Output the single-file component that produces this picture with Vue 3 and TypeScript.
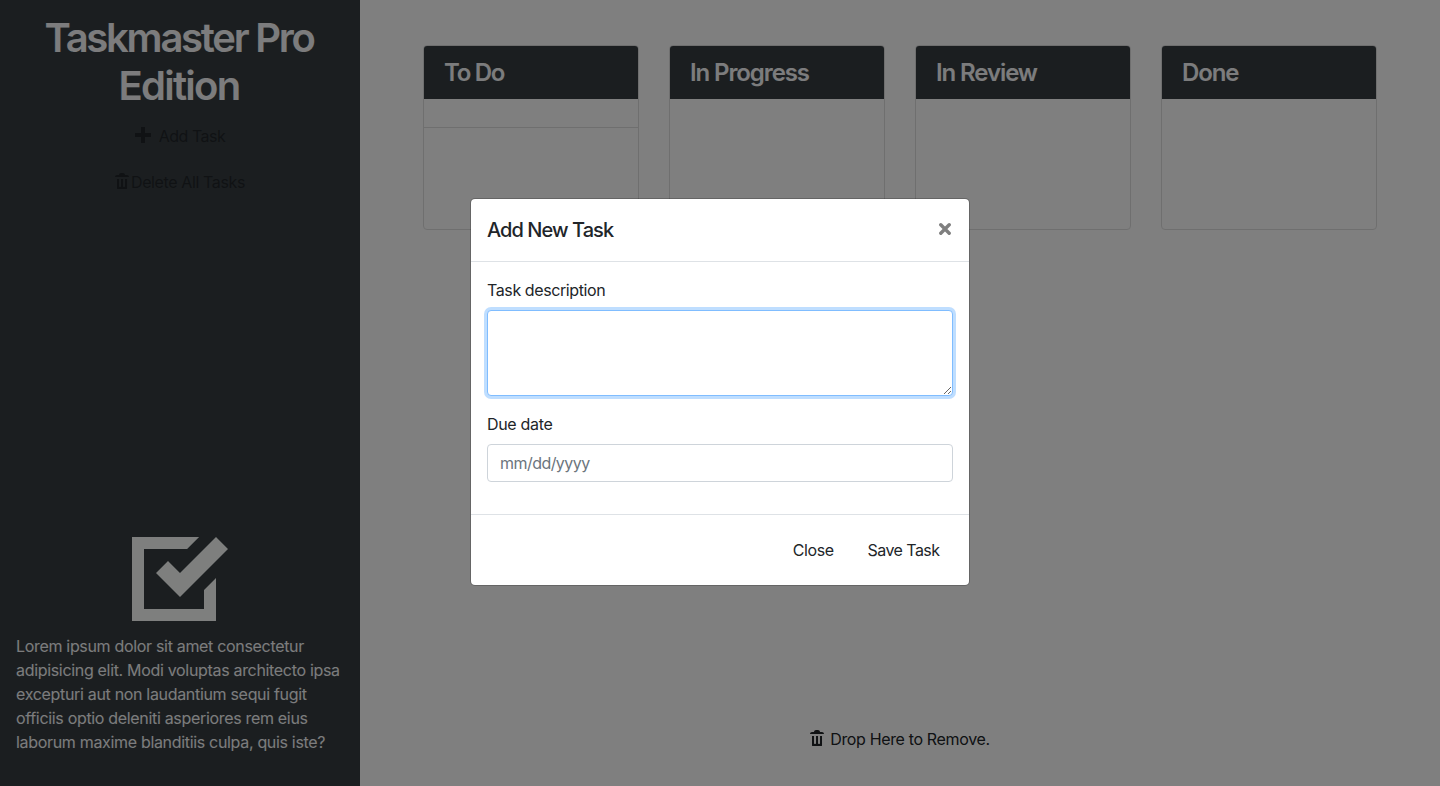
<script setup lang="ts">
import { ref } from 'vue'

interface Column {
  title: string
  kind: string
  tasks: string[]
}

const columns: Column[] = [
  { title: 'To Do', kind: 'todo', tasks: [''] },
  { title: 'In Progress', kind: 'progress', tasks: [] },
  { title: 'In Review', kind: 'review', tasks: [] },
  { title: 'Done', kind: 'done', tasks: [] },
]

const description = ref('')
const dueDate = ref('')

const trashPath =
  'M3 0c-.55 0-1 .45-1 1h-1c-.55 0-1 .45-1 1h7c0-.55-.45-1-1-1h-1c0-.55-.45-1-1-1h-1zm-2 3v4.81c0 .11.08.19.19.19h4.63c.11 0 .19-.08.19-.19v-4.81h-1v3.5c0 .28-.22.5-.5.5s-.5-.22-.5-.5v-3.5h-1v3.5c0 .28-.22.5-.5.5s-.5-.22-.5-.5v-3.5h-1z'
</script>

<template>
  <div class="page">
    <aside class="sidebar">
      <header class="brand">
        <h1><span class="first">Taskmaster Pro</span> <span class="second">Edition</span></h1>
        <button class="btn add" type="button">
          <svg class="icon" viewBox="0 0 8 8"><path d="M3 0v3h-3v2h3v3h2v-3h3v-2h-3v-3h-2z" /></svg>
          <span>Add Task</span>
        </button>
        <button class="btn delete" type="button">
          <svg class="icon" viewBox="0 0 8 8"><path :d="trashPath" /></svg>
          <span>Delete All Tasks</span>
        </button>
      </header>
      <footer class="about">
        <svg class="logo" viewBox="0 0 8 8">
          <path d="M0 0v7h7v-3.59l-1 1v1.59h-5v-5h3.59l1-1h-5.59zm7 0l-3 3-1-1-1 1 2 2 4-4-1-1z" />
        </svg>
        <p>
          Lorem ipsum dolor sit amet consectetur adipisicing elit. Modi voluptas architecto ipsa
          excepturi aut non laudantium sequi fugit officiis optio deleniti asperiores rem eius
          laborum maxime blanditiis culpa, quis iste?
        </p>
      </footer>
    </aside>

    <main class="board">
      <div class="columns">
        <section v-for="column in columns" :key="column.title" class="card">
          <h4 :class="column.kind">{{ column.title }}</h4>
          <ul>
            <li v-for="(task, i) in column.tasks" :key="i">{{ task }}</li>
          </ul>
        </section>
      </div>
      <div class="drop">
        <svg class="icon" viewBox="0 0 8 8"><path :d="trashPath" /></svg>
        <span>Drop Here to Remove.</span>
      </div>
    </main>

    <div class="backdrop">
      <form class="modal" @submit.prevent>
        <div class="modal-header">
          <h5>Add New Task</h5>
          <button class="close" type="button" aria-label="Close">
            <svg viewBox="0 0 12 12"><path d="M1.8 1.8L10.2 10.2M10.2 1.8L1.8 10.2" /></svg>
          </button>
        </div>
        <div class="modal-body">
          <label class="desc-label" for="description">Task description</label>
          <textarea id="description" v-model="description" rows="3"></textarea>
          <label class="date-label" for="due">Due date</label>
          <input id="due" v-model="dueDate" type="text" placeholder="mm/dd/yyyy" />
        </div>
        <div class="modal-footer">
          <button class="btn cancel" type="button">Close</button>
          <button class="btn save" type="button">Save Task</button>
        </div>
      </form>
    </div>
  </div>
</template>

<style>
body {
  margin: 0;
  overflow: hidden;
}
</style>

<style scoped>
* {
  box-sizing: border-box;
}

.page {
  position: relative;
  display: flex;
  height: 786px;
  background: #fff;
  color: #212529;
  font-family: Inter, 'Liberation Sans', sans-serif;
  font-size: 16px;
  line-height: 24px;
  letter-spacing: -0.32px;
}

h1,
h4,
h5,
p,
ul {
  margin: 0;
  padding: 0;
}

.sidebar {
  display: flex;
  flex-direction: column;
  justify-content: space-between;
  width: 360px;
  padding: 14px 16px 32px;
  background: #363d41;
  color: #f8f9fa;
}

.brand {
  display: flex;
  flex-direction: column;
  align-items: center;
  text-align: center;
}

h1 {
  width: 290px;
  margin-bottom: 7px;
  padding-right: 2px;
  font-size: 40px;
  font-weight: 600;
  line-height: 48px;
}

.first {
  letter-spacing: -2.25px;
}

.second {
  letter-spacing: -1.75px;
}

.btn {
  display: flex;
  align-items: center;
  height: 38px;
  padding: 0 13px;
  border: 0;
  background: transparent;
  color: #212529;
  font: inherit;
  letter-spacing: inherit;
}

.icon {
  width: 16px;
  height: 16px;
  fill: currentColor;
}

.add {
  gap: 8px;
  margin-bottom: 8px;
  letter-spacing: -0.5px;
}

.delete {
  letter-spacing: -0.38px;
}

.add .icon,
.delete .icon {
  margin-top: -2px;
}

.logo {
  display: block;
  width: 96px;
  height: 96px;
  margin: 0 auto 1px;
  fill: #fcfffc;
}

.about p {
  margin-right: -4px;
}

.board {
  display: flex;
  flex: 1;
  flex-direction: column;
  justify-content: space-between;
  padding: 45px 63px 35px;
}

.columns {
  display: grid;
  grid-template-columns: repeat(4, 216px);
  gap: 30px;
}

.card {
  height: 185px;
  overflow: hidden;
  border: 1px solid #dfdfdf;
  border-radius: 4px;
}

.card h4 {
  height: 53px;
  padding: 0 20px;
  background: #363d41;
  color: #f8f9fa;
  font-size: 24px;
  font-weight: 600;
  line-height: 54px;
  letter-spacing: -1.1px;
}

.card h4.todo {
  letter-spacing: -1.3px;
}

.card ul {
  list-style: none;
}

.card li {
  height: 29px;
  border-bottom: 1px solid #dfdfdf;
}

.drop {
  display: flex;
  align-items: center;
  justify-content: center;
  gap: 4px;
  letter-spacing: -0.35px;
}

.drop .icon {
  margin-top: -2px;
}

.backdrop {
  position: absolute;
  inset: 0;
  display: flex;
  align-items: flex-start;
  justify-content: center;
  padding-top: 198px;
  background: rgba(0, 0, 0, 0.5);
}

.modal {
  width: 500px;
  height: 388px;
  border: 1px solid rgba(0, 0, 0, 0.2);
  border-radius: 5px;
  background: #fff;
  background-clip: padding-box;
}

.modal-header {
  display: flex;
  align-items: center;
  justify-content: space-between;
  height: 63px;
  padding: 0 18px 0 16px;
  border-bottom: 1px solid #dee2e6;
}

h5 {
  font-size: 20px;
  font-weight: 500;
  line-height: 30px;
  letter-spacing: -0.94px;
}

.close {
  display: flex;
  padding: 0;
  border: 0;
  background: transparent;
}

.close svg {
  width: 12px;
  height: 12px;
  margin-top: -2px;
  fill: none;
  stroke: #7f7f7f;
  stroke-linecap: round;
  stroke-width: 3.4;
}

.modal-body {
  height: 253px;
  padding: 16px;
  border-bottom: 1px solid #dee2e6;
}

label {
  display: block;
  margin-bottom: 8px;
}

.desc-label {
  letter-spacing: -0.4px;
}

textarea,
input {
  display: block;
  width: 100%;
  padding: 6px 12px;
  border: 1px solid #ced4da;
  border-radius: 4px;
  outline: 0;
  background: #fff;
  color: #495057;
  font: inherit;
  letter-spacing: -0.55px;
}

textarea {
  height: 86px;
  margin-bottom: 16px;
  overflow: auto;
  border-color: #80bdff;
  box-shadow: 0 0 0 3px rgba(0, 123, 255, 0.25);
  resize: vertical;
}

input {
  height: 38px;
}

input::placeholder {
  color: #6c757d;
  opacity: 1;
}

.modal-footer {
  display: flex;
  align-items: center;
  justify-content: flex-end;
  gap: 8px;
  height: 70px;
  padding: 0 16px;
}

.cancel {
  letter-spacing: -0.45px;
}

.save {
  padding-right: 13.5px;
  letter-spacing: -0.55px;
}
</style>
